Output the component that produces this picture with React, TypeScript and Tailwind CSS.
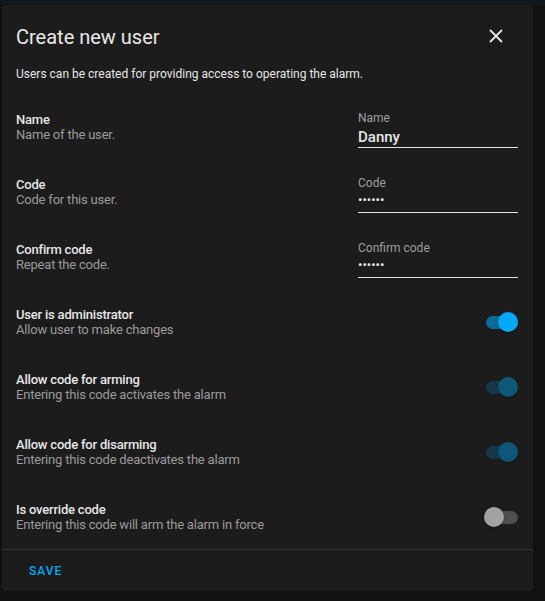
import React from "react";

type Tone = "on" | "dim" | "off";

const Toggle: React.FC<{ tone: Tone }> = ({ tone }) => {
  const track =
    tone === "on" ? "bg-[#0b6b99]" : tone === "dim" ? "bg-[#17384a]" : "bg-[#4f4f4f]";
  const thumb =
    tone === "on" ? "bg-[#03a9f4]" : tone === "dim" ? "bg-[#0e5779]" : "bg-[#a2a2a2]";
  const side = tone === "off" ? "justify-start" : "justify-end";
  return (
    <div className={`relative flex items-center ${side} w-[34px] h-[20px]`}>
      <div className={`absolute left-[2px] right-[0px] top-[4px] h-[13px] rounded-full ${track}`} />
      <div className={`relative w-[20px] h-[20px] rounded-full ${thumb} shadow-[0_1px_2px_rgba(0,0,0,0.4)]`} />
    </div>
  );
};

const Label: React.FC<{ title: string; sub: string }> = ({ title, sub }) => (
  <div className="flex flex-col tracking-[-0.2px]">
    <p className="text-[13px] leading-[15px] font-medium text-[#e6e6e6]">{title}</p>
    <p className="text-[13px] leading-[15px] text-[#9a9a9a]">{sub}</p>
  </div>
);

const Field: React.FC<{ label: string; value: string; secret?: boolean }> = ({ label, value, secret }) => (
  <div className="flex flex-col w-[160px] h-[65px] pt-[18px]">
    <p className="text-[12px] leading-[13px] text-[#9e9e9e]">{label}</p>
    <div className="flex items-center h-[23px] border-b border-[#e1e1e1]">
      {secret ? (
        <span className="text-[13px] leading-[14px] text-[#e6e6e6] pb-[2px]">{value}</span>
      ) : (
        <span className="text-[15px] leading-[18px] font-medium text-[#e6e6e6] pt-[2px]">{value}</span>
      )}
    </div>
  </div>
);

const App: React.FC = () => {
  return (
    <div className="w-[545px] h-[601px] bg-[#111111] font-['Roboto',sans-serif] overflow-hidden">
      <div className="h-[5px] bg-[#111820]" />
      <div className="ml-[2px] w-[531px] h-[586px] bg-[#1c1c1c] rounded-[4px] flex flex-col">
        <div className="flex items-center justify-between pl-[14px] pr-[30px] h-[62px] pt-[2px]">
          <h1 className="text-[20px] leading-[24px] text-[#e8e8e8]">Create new user</h1>
          <svg width="14" height="14" viewBox="0 0 14 14" className="text-[#e6e6e6] mb-[2px]">
            <path d="M1 1 L13 13 M13 1 L1 13" stroke="currentColor" strokeWidth="1.8" />
          </svg>
        </div>
        <p className="px-[14px] text-[12px] leading-[16px] text-[#e6e6e6]">
          Users can be created for providing access to operating the alarm.
        </p>
        <div className="flex flex-col px-[14px] pr-[15px] mt-[12px]">
          <div className="flex items-center justify-between h-[65px]">
            <Label title="Name" sub="Name of the user." />
            <Field label="Name" value="Danny" />
          </div>
          <div className="flex items-center justify-between h-[65px]">
            <Label title="Code" sub="Code for this user." />
            <Field label="Code" value="••••••" secret />
          </div>
          <div className="flex items-center justify-between h-[65px]">
            <Label title="Confirm code" sub="Repeat the code." />
            <Field label="Confirm code" value="••••••" secret />
          </div>
          <div className="flex items-center justify-between h-[65px]">
            <Label title="User is administrator" sub="Allow user to make changes" />
            <Toggle tone="on" />
          </div>
          <div className="flex items-center justify-between h-[65px]">
            <Label title="Allow code for arming" sub="Entering this code activates the alarm" />
            <Toggle tone="dim" />
          </div>
          <div className="flex items-center justify-between h-[65px]">
            <Label title="Allow code for disarming" sub="Entering this code deactivates the alarm" />
            <Toggle tone="dim" />
          </div>
          <div className="flex items-center justify-between h-[65px]">
            <Label title="Is override code" sub="Entering this code will arm the alarm in force" />
            <Toggle tone="off" />
          </div>
        </div>
        <div className="border-t border-[#333333] flex items-center h-[42px] px-[27px]">
          <button className="text-[12px] font-medium tracking-[1px] text-[#03a9f4]">SAVE</button>
        </div>
      </div>
    </div>
  );
};

export default App;
